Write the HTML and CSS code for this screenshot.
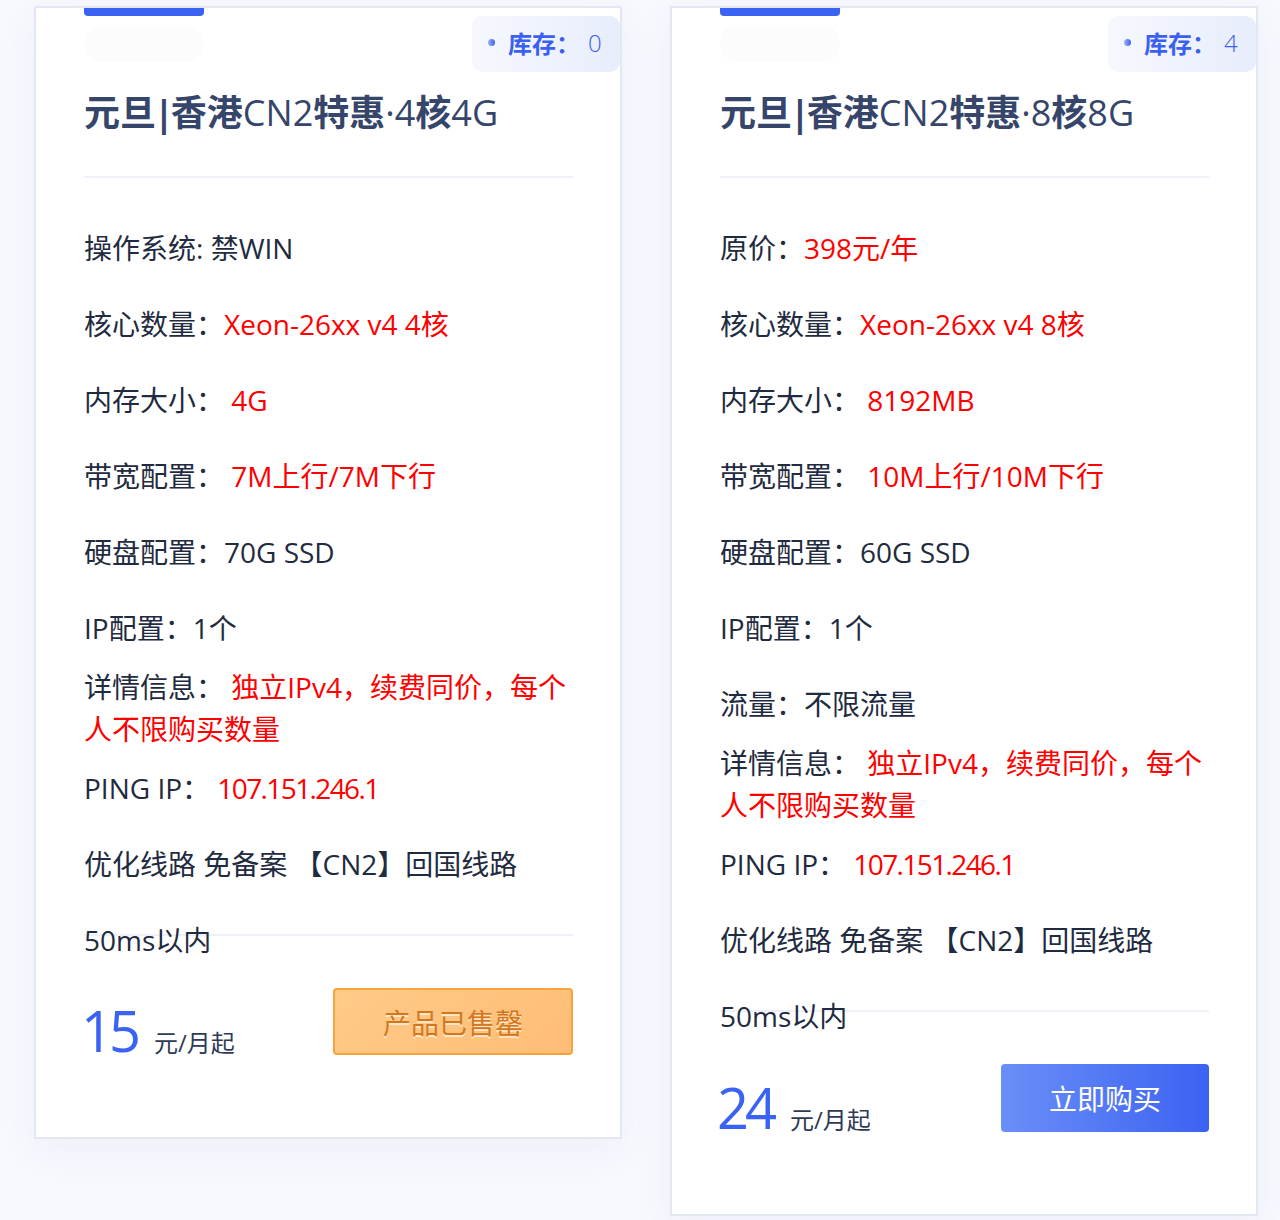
FILE: index.html
```html
<!DOCTYPE html>
<html lang="zh-CN">
<head>
<meta charset="utf-8">
<title>元旦|香港CN2特惠</title>
<link rel="stylesheet" href="styles.css">
</head>
<body>
<div class="page">
  <div class="card">
    <div class="accent"></div>
    <div class="ghost"></div>
    <div class="stock"><span class="dot"></span><b>库存：</b><span class="qty">0</span></div>
    <h2 class="title">元旦<span class="bar">|</span>香港<span class="lt">CN2</span>特惠<span class="lt">·4</span>核<span class="lt">4G</span></h2>
    <div class="divider"></div>
    <ul class="specs">
      <li>操作系统: 禁WIN</li>
      <li>核心数量：<span class="red">Xeon-26xx v4 4核</span></li>
      <li>内存大小： <span class="red">4G</span></li>
      <li>带宽配置： <span class="red">7M上行/7M下行</span></li>
      <li>硬盘配置：70G SSD</li>
      <li>IP配置：1个</li>
      <li class="detail">详情信息： <span class="red">独立IPv4，续费同价，每个人不限购买数量</span></li>
      <li>PING IP： <span class="red ip">107.151.246.1</span></li>
      <li>优化线路 免备案 【CN2】回国线路</li>
      <li>50ms以内</li>
    </ul>
    <div class="foot">
      <div class="price"><span class="amount">15</span><span class="unit">元/月起</span></div>
      <a class="btn sold">产品已售罄</a>
    </div>
  </div>

  <div class="card">
    <div class="accent"></div>
    <div class="ghost"></div>
    <div class="stock"><span class="dot"></span><b>库存：</b><span class="qty">4</span></div>
    <h2 class="title">元旦<span class="bar">|</span>香港<span class="lt">CN2</span>特惠<span class="lt">·8</span>核<span class="lt">8G</span></h2>
    <div class="divider"></div>
    <ul class="specs">
      <li>原价：<span class="red">398元/年</span></li>
      <li>核心数量：<span class="red">Xeon-26xx v4 8核</span></li>
      <li>内存大小： <span class="red">8192MB</span></li>
      <li>带宽配置： <span class="red">10M上行/10M下行</span></li>
      <li>硬盘配置：60G SSD</li>
      <li>IP配置：1个</li>
      <li>流量：不限流量</li>
      <li class="detail">详情信息： <span class="red">独立IPv4，续费同价，每个人不限购买数量</span></li>
      <li>PING IP： <span class="red ip">107.151.246.1</span></li>
      <li>优化线路 免备案 【CN2】回国线路</li>
      <li>50ms以内</li>
    </ul>
    <div class="foot">
      <div class="price"><span class="amount">24</span><span class="unit">元/月起</span></div>
      <a class="btn buy">立即购买</a>
    </div>
  </div>
</div>
</body>
</html>
```

FILE: styles.css
```css
html, body {
  margin: 0;
  padding: 0;
}
body {
  background: #f7f9fe;
  font-family: "Open Sans", "Noto Sans CJK SC", sans-serif;
  color: #1f2b40;
  min-height: 1220px;
}
.page {
  display: flex;
  align-items: flex-start;
  gap: 48px;
  padding: 6px 0 0 34px;
}
.card {
  position: relative;
  width: 588px;
  box-sizing: border-box;
  background: #fff;
  border: 2px solid #e3e7f1;
  padding: 0 47px 82px 48px;
  box-shadow: 0 12px 40px rgba(60, 80, 170, 0.06);
}
.accent {
  width: 120px;
  height: 8px;
  background: #3b63f3;
  border-radius: 0 0 4px 4px;
}
.ghost {
  width: 120px;
  height: 37px;
  margin-top: 9px;
  border-radius: 18px;
  background: #fcfcfd;
}
.stock {
  position: absolute;
  top: 8px;
  right: 0;
  width: 148px;
  height: 56px;
  box-sizing: border-box;
  padding-left: 16px;
  padding-bottom: 3px;
  border-radius: 10px;
  background: linear-gradient(90deg, #f6f8fe, #e8edfc);
  display: flex;
  align-items: center;
  color: #3a60f1;
  font-size: 24px;
}
.stock .dot {
  width: 7px;
  height: 7px;
  border-radius: 50%;
  background: linear-gradient(90deg, #9fb2f6, #3a60f1);
  margin-right: 13px;
}
.stock b {
  font-weight: 700;
}
.stock .qty {
  margin-left: 8px;
  font-weight: 300;
}
.title {
  margin: 26px 0 0;
  font-size: 36px;
  line-height: 50px;
  font-weight: 700;
  color: #36456a;
  white-space: nowrap;
}
.title .lt {
  font-weight: 400;
}
.title .bar {
  display: inline-block;
  margin: 0 -3px 0 -2px;
}
.divider {
  height: 2px;
  margin-top: 38px;
  background: #eef1f9;
}
.specs {
  list-style: none;
  margin: 32px 0 0;
  padding: 0;
  font-size: 28px;
  line-height: 76px;
}
.specs li {
  white-space: pre-wrap;
}
.specs .detail {
  line-height: 42px;
}
.red {
  color: #ff0000;
}
.ip {
  letter-spacing: -1.6px;
}
.foot {
  margin-top: -44px;
  border-top: 2px solid #eef1f9;
  padding-top: 52px;
  display: flex;
  justify-content: space-between;
  align-items: flex-end;
}
.price {
  display: flex;
  align-items: baseline;
  line-height: 1;
  margin-bottom: -3px;
}
.amount {
  font-size: 56px;
  color: #3b63f3;
  font-weight: 400;
  letter-spacing: -4px;
  margin-left: -3px;
}
.unit {
  font-size: 24px;
  color: #2f3b56;
  margin-left: 17px;
}
.btn {
  display: flex;
  align-items: center;
  justify-content: center;
  box-sizing: border-box;
  border-radius: 4px;
  font-size: 28px;
  text-decoration: none;
  cursor: pointer;
}
.sold {
  width: 240px;
  height: 67px;
  background: linear-gradient(135deg, #ffca88, #ffbd76);
  border: 2px solid #f8a43c;
  color: #d4761c;
  text-shadow: 0 2px 0 rgba(255, 240, 220, 0.8);
}
.buy {
  width: 208px;
  height: 68px;
  background: linear-gradient(90deg, #6a8ff7, #3c62f2);
  color: #fff;
}
```
